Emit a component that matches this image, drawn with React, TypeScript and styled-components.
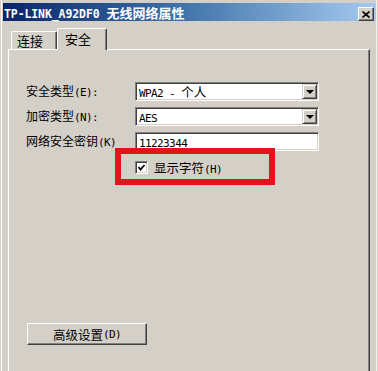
import React from "react";
import styled, { createGlobalStyle } from "styled-components";

const GlobalStyle = createGlobalStyle`
  html, body {
    margin: 0;
    padding: 0;
    background: #d4d0c8;
  }
  body {
    font-family: "Noto Sans CJK SC", sans-serif;
    font-size: 12px;
    color: #000;
  }
`;

const Window = styled.div`
  width: 378px;
  height: 371px;
  box-sizing: border-box;
  overflow: hidden;
  padding: 3px 2px 0 3px;
  background: #d4d0c8;
  box-shadow: inset 1px 0 #d4d0c8, inset 2px 0 #ffffff, inset -1px 0 #d4d0c8,
    inset -2px 0 #f4f2ee;
`;

const TitleBar = styled.div`
  height: 18px;
  display: flex;
  align-items: center;
  justify-content: space-between;
  padding: 0 2px 0 1px;
  background: linear-gradient(to right, #0a246a 0%, #3a6ea5 45%, #a6caf0 100%);
  color: #fff;
  font-weight: bold;
`;

const TitleText = styled.div`
  display: flex;
  align-items: baseline;
  gap: 7px;
  white-space: nowrap;
`;

const TitleLatin = styled.span`
  font-family: "DejaVu Sans Mono", monospace;
  font-size: 11.5px;
  letter-spacing: -0.1px;
  font-weight: bold;
`;

const TitleCjk = styled.span`
  font-family: "Noto Sans CJK SC", sans-serif;
  font-size: 13px;
  font-weight: bold;
`;

const CloseButton = styled.div`
  width: 16px;
  height: 14px;
  box-sizing: border-box;
  margin-top: 4px;
  display: flex;
  align-items: center;
  justify-content: center;
  background: #d4d0c8;
  border-top: 1px solid #fff;
  border-left: 1px solid #fff;
  border-right: 1px solid #404040;
  border-bottom: 1px solid #404040;
  box-shadow: inset -1px -1px #808080;
`;

const TabStrip = styled.div`
  display: flex;
  align-items: flex-end;
  height: 21px;
  margin: 7px 0 0 8px;
`;

const Tab = styled.div<{ $active?: boolean }>`
  position: relative;
  z-index: ${({ $active }) => ($active ? 1 : 0)};
  box-sizing: border-box;
  height: ${({ $active }) => ($active ? "22px" : "18px")};
  margin-bottom: ${({ $active }) => ($active ? "-1px" : "0")};
  width: ${({ $active }) => ($active ? "50px" : "46px")};
  padding: ${({ $active }) => ($active ? "1px 0 0 7px" : "0 0 0 5px")};
  display: flex;
  align-items: ${({ $active }) => ($active ? "flex-start" : "center")};
  background: #d4d0c8;
  border-top: 1px solid #fff;
  border-left: 1px solid #fff;
  border-right: 1px solid #404040;
  box-shadow: inset -1px 0 #808080;
  border-radius: 2px 2px 0 0;
  font-size: 13px;
  line-height: 18px;
`;

const Panel = styled.div`
  margin-left: 5px;
  width: 362px;
  height: 330px;
  box-sizing: border-box;
  border-top: 1px solid #fff;
  border-left: 1px solid #fff;
  border-right: 1px solid #404040;
  box-shadow: inset -1px 0 #808080;
  padding: 32px 0 0 17px;
`;

const FormGrid = styled.div`
  display: grid;
  grid-template-columns: 109px 184px;
  grid-auto-rows: 19px;
  row-gap: 6px;
  align-items: center;
`;

const Label = styled.div`
  font-size: 12px;
  white-space: nowrap;
  line-height: 19px;
`;

const Latin = styled.span`
  font-family: "DejaVu Sans Mono", monospace;
  font-size: 11px;
  letter-spacing: -0.6px;
`;

const Field = styled.div`
  position: relative;
  height: 19px;
  box-sizing: border-box;
  background: #fff;
  border-top: 1px solid #808080;
  border-left: 1px solid #808080;
  border-right: 1px solid #fff;
  border-bottom: 1px solid #fff;
  box-shadow: inset 1px 1px #404040, inset -1px -1px #d4d0c8;
  padding-left: 3px;
  line-height: 17px;
  font-size: 12.5px;
  white-space: pre;
`;

const DropButton = styled.div`
  position: absolute;
  right: 1px;
  top: 1px;
  width: 15px;
  height: 15px;
  box-sizing: border-box;
  background: #d4d0c8;
  border-top: 1px solid #d4d0c8;
  border-left: 1px solid #d4d0c8;
  border-right: 1px solid #404040;
  border-bottom: 1px solid #404040;
  box-shadow: inset 1px 1px #fff, inset -1px -1px #808080;
  display: flex;
  align-items: center;
  justify-content: center;

  &::after {
    content: "";
    width: 0;
    height: 0;
    border-left: 4px solid transparent;
    border-right: 4px solid transparent;
    border-top: 4px solid #000;
    margin-top: 1px;
  }
`;

const CheckRow = styled.label`
  position: relative;
  display: flex;
  align-items: center;
  gap: 6px;
  margin: 10px 0 0 109px;
  width: 140px;
  height: 13px;
  font-size: 12.5px;
  white-space: nowrap;
`;

const CheckBox = styled.span`
  width: 13px;
  height: 13px;
  box-sizing: border-box;
  background: #fff;
  border-top: 1px solid #808080;
  border-left: 1px solid #808080;
  border-right: 1px solid #fff;
  border-bottom: 1px solid #fff;
  box-shadow: inset 1px 1px #404040, inset -1px -1px #d4d0c8;
  display: flex;
  align-items: center;
  justify-content: center;
`;

const Highlight = styled.div`
  position: absolute;
  left: -20px;
  top: -13px;
  width: 160px;
  height: 37px;
  box-sizing: border-box;
  border: 6px solid #e0141a;
  pointer-events: none;
`;

const Button = styled.div`
  margin: 149px 0 0 1px;
  width: 120px;
  height: 22px;
  box-sizing: border-box;
  background: #d4d0c8;
  border-top: 1px solid #fff;
  border-left: 1px solid #fff;
  border-right: 1px solid #404040;
  border-bottom: 1px solid #404040;
  box-shadow: inset -1px -1px #808080;
  display: flex;
  align-items: center;
  justify-content: center;
  font-size: 12.5px;
`;

export default function App() {
  return (
    <Window>
      <GlobalStyle />
      <TitleBar>
        <TitleText>
          <TitleLatin>TP-LINK_A92DF0</TitleLatin>
          <TitleCjk>无线网络属性</TitleCjk>
        </TitleText>
        <CloseButton>
          <svg width="8" height="7" viewBox="0 0 8 7">
            <path d="M0.5 0.5 L7.5 6.5 M7.5 0.5 L0.5 6.5" stroke="#000" strokeWidth="1.6" />
          </svg>
        </CloseButton>
      </TitleBar>
      <TabStrip>
        <Tab>连接</Tab>
        <Tab $active>安全</Tab>
      </TabStrip>
      <Panel>
        <FormGrid>
          <Label>
            安全类型<Latin>(E):</Latin>
          </Label>
          <Field>
            <Latin>WPA2 - </Latin>个人
            <DropButton />
          </Field>
          <Label>
            加密类型<Latin>(N):</Latin>
          </Label>
          <Field>
            <Latin>AES</Latin>
            <DropButton />
          </Field>
          <Label>
            网络安全密钥<Latin>(K)</Latin>
          </Label>
          <Field>
            <Latin>11223344</Latin>
          </Field>
        </FormGrid>
        <CheckRow>
          <CheckBox>
            <svg width="7" height="7" viewBox="0 0 7 7">
              <path d="M0.5 3 L2.5 5.5 L6.5 1" stroke="#000" strokeWidth="1.8" fill="none" />
            </svg>
          </CheckBox>
          <span>
            显示字符<Latin>(H)</Latin>
          </span>
          <Highlight />
        </CheckRow>
        <Button>
          高级设置<Latin>(D)</Latin>
        </Button>
      </Panel>
    </Window>
  );
}
